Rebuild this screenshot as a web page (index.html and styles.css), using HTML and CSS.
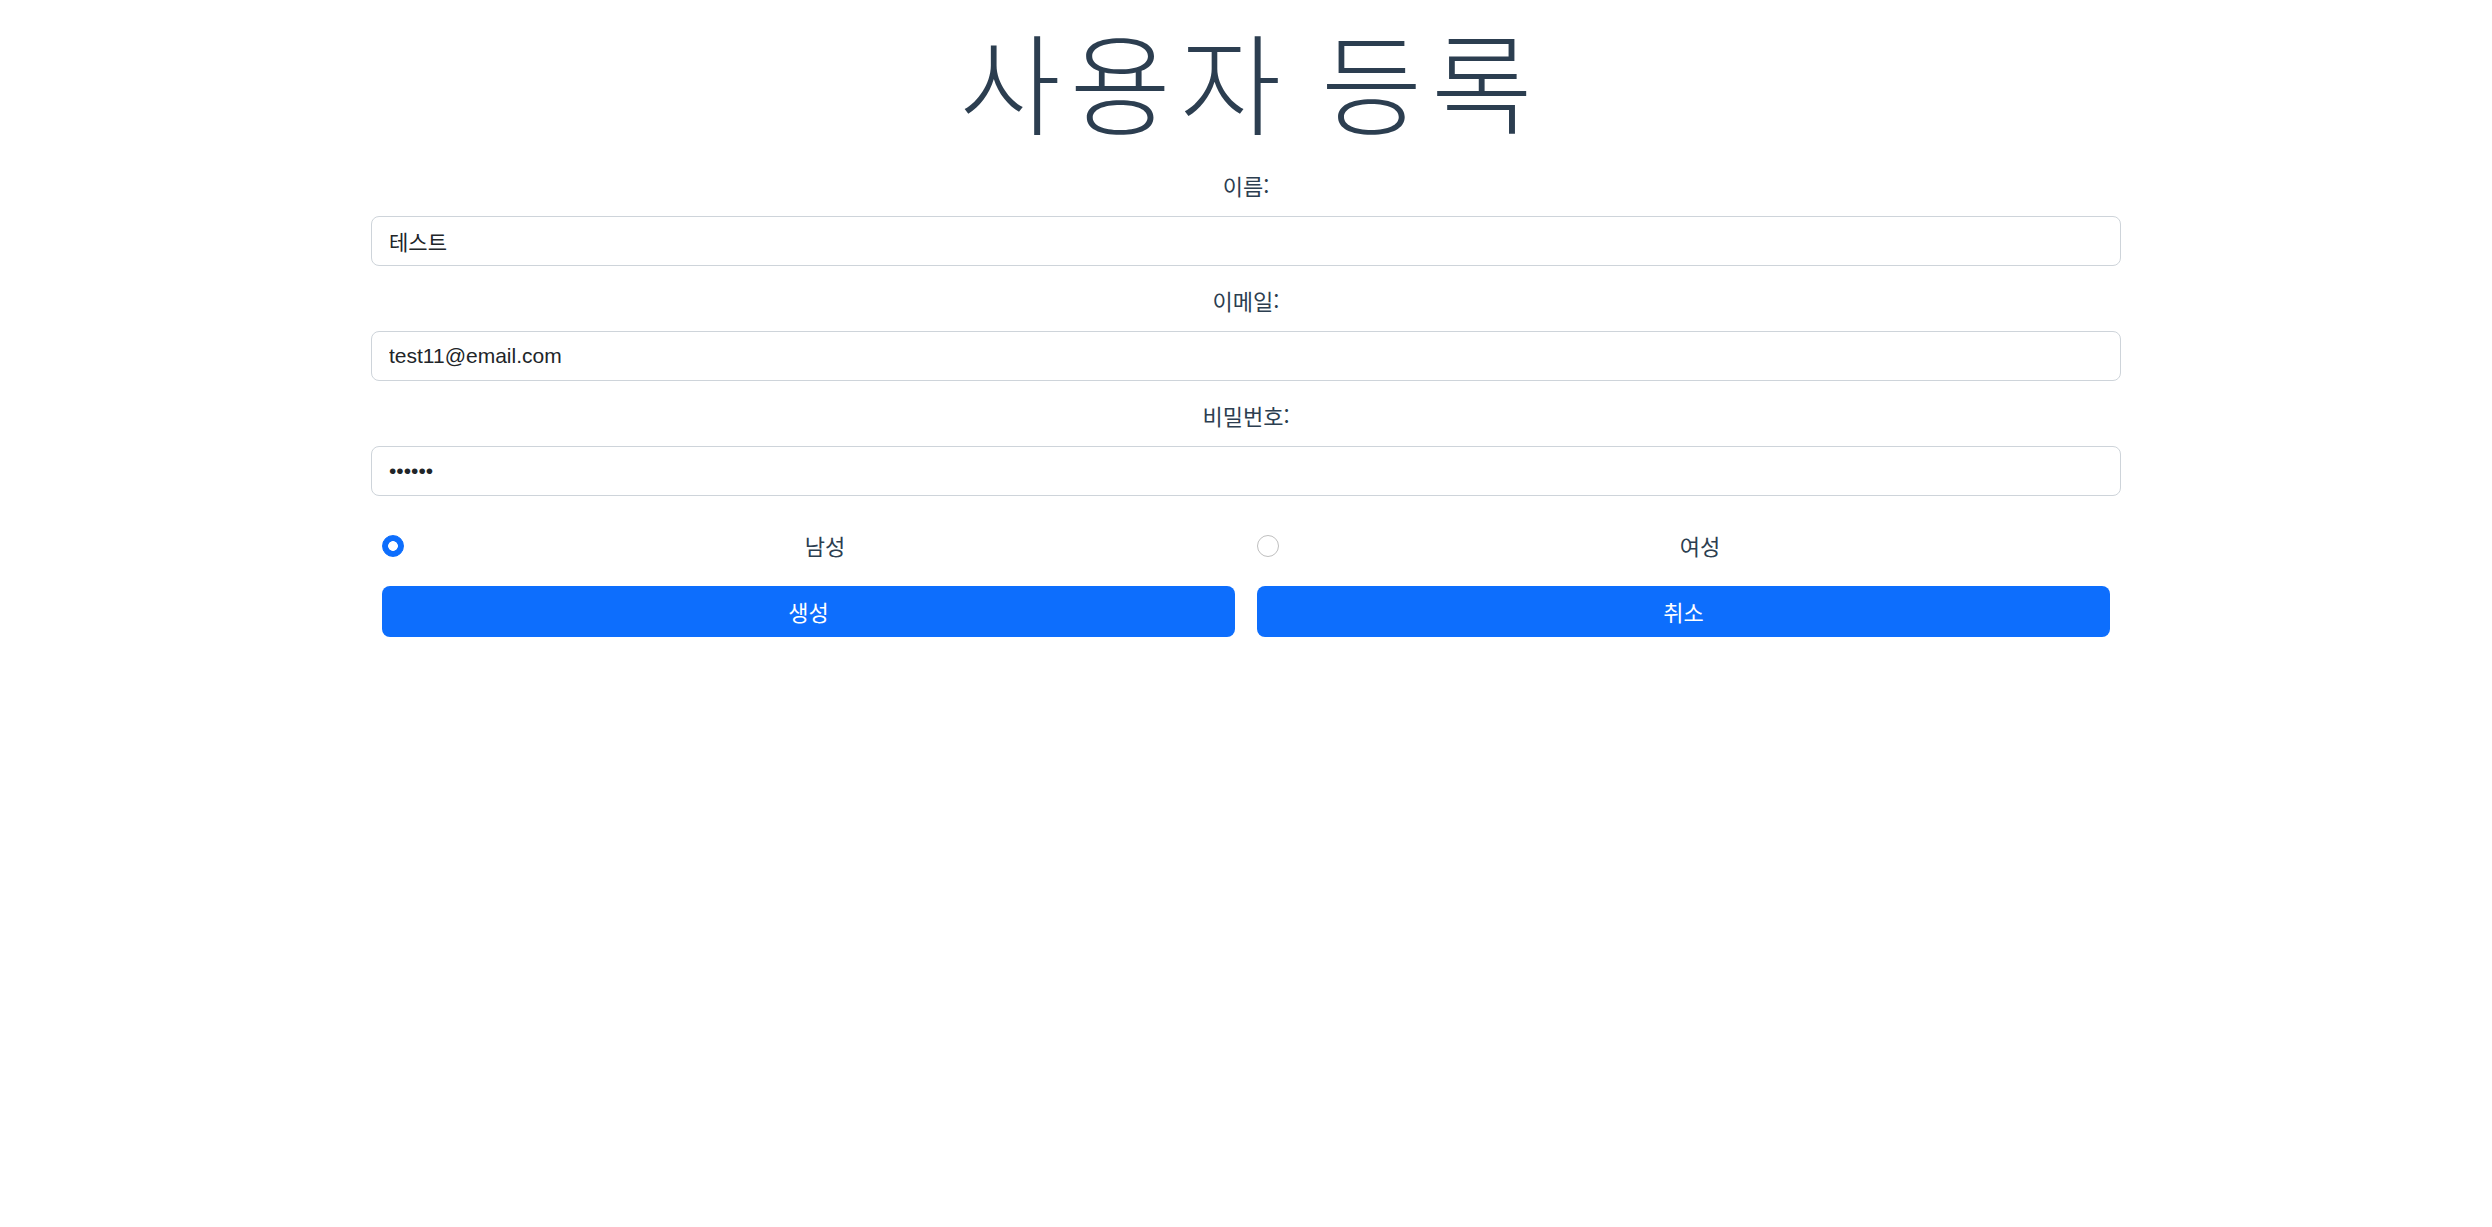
FILE: index.html
```html
<!DOCTYPE html>
<html lang="ko">
<head>
<meta charset="utf-8">
<title>사용자 등록</title>
<link rel="stylesheet" href="styles.css">
</head>
<body>
<div class="app">
  <h1 class="page-title">사용자 등록</h1>
  <form class="signup-form">
    <div class="field">
      <label class="field-label" for="name">이름:</label>
      <input class="field-input" id="name" type="text" value="테스트">
    </div>
    <div class="field">
      <label class="field-label" for="email">이메일:</label>
      <input class="field-input" id="email" type="email" value="test11@email.com">
    </div>
    <div class="field">
      <label class="field-label" for="password">비밀번호:</label>
      <input class="field-input" id="password" type="password" value="123456">
    </div>
    <div class="pair-row gender-row">
      <div class="pair-col radio-col">
        <input class="radio" type="radio" name="gender" id="male" checked>
        <label class="radio-label" for="male">남성</label>
      </div>
      <div class="pair-col radio-col">
        <input class="radio" type="radio" name="gender" id="female">
        <label class="radio-label" for="female">여성</label>
      </div>
    </div>
    <div class="pair-row button-row">
      <div class="pair-col">
        <button class="action-btn" type="button">생성</button>
      </div>
      <div class="pair-col">
        <button class="action-btn" type="button">취소</button>
      </div>
    </div>
  </form>
</div>
</body>
</html>
```

FILE: styles.css
```css
* {
  box-sizing: border-box;
}

html, body {
  margin: 0;
  padding: 0;
  background: #ffffff;
}

body {
  font-family: "Noto Sans CJK KR", "Noto Sans", sans-serif;
  color: #2c3e50;
}

.app {
  width: 1750px;
  margin: 0 auto;
  text-align: center;
}

.page-title {
  margin: 0;
  padding-left: 9px;
  font-size: 110px;
  font-weight: 300;
  line-height: 159px;
  letter-spacing: 9px;
  word-spacing: -9px;
  color: #2c3e50;
}

.signup-form {
  display: block;
}

.field {
  display: flex;
  flex-direction: column;
}

.field-label {
  display: block;
  margin-top: 10px;
  margin-bottom: 14px;
  font-size: 22px;
  line-height: 33px;
  color: #2c3e50;
  text-align: center;
}

.field + .field .field-label {
  margin-top: 18px;
}

.field-input {
  display: block;
  width: 100%;
  height: 50px;
  margin: 0;
  padding: 0 17px;
  border: 1px solid #ced4da;
  border-radius: 8px;
  background: #ffffff;
  font-family: "Liberation Sans", "Noto Sans CJK KR", sans-serif;
  font-size: 21px;
  color: #212529;
  outline: none;
}

.pair-row {
  display: grid;
  grid-template-columns: 1fr 1fr;
}

.pair-col {
  padding: 0 11px;
}

.gender-row {
  margin-top: 33px;
}

.radio-col {
  display: flex;
  align-items: center;
  height: 33px;
}

.radio {
  appearance: none;
  -webkit-appearance: none;
  flex: 0 0 22px;
  width: 22px;
  height: 22px;
  margin: 0 11px 0 0;
  border: 1px solid #bfbfbf;
  border-radius: 50%;
  background: #ffffff;
}

.radio:checked {
  border-color: #0d6efd;
  background: radial-gradient(circle, #ffffff 0 4.5px, #0d6efd 5.2px);
}

.radio-label {
  flex: 1;
  text-align: center;
  font-size: 22px;
  line-height: 33px;
  color: #2c3e50;
}

.button-row {
  margin-top: 24px;
}

.action-btn {
  display: block;
  width: 100%;
  height: 51px;
  margin: 0;
  padding: 0;
  border: none;
  border-radius: 8px;
  background: #0d6efd;
  color: #ffffff;
  font-family: "Noto Sans CJK KR", "Noto Sans", sans-serif;
  font-size: 22px;
  line-height: 51px;
  cursor: pointer;
}
```
